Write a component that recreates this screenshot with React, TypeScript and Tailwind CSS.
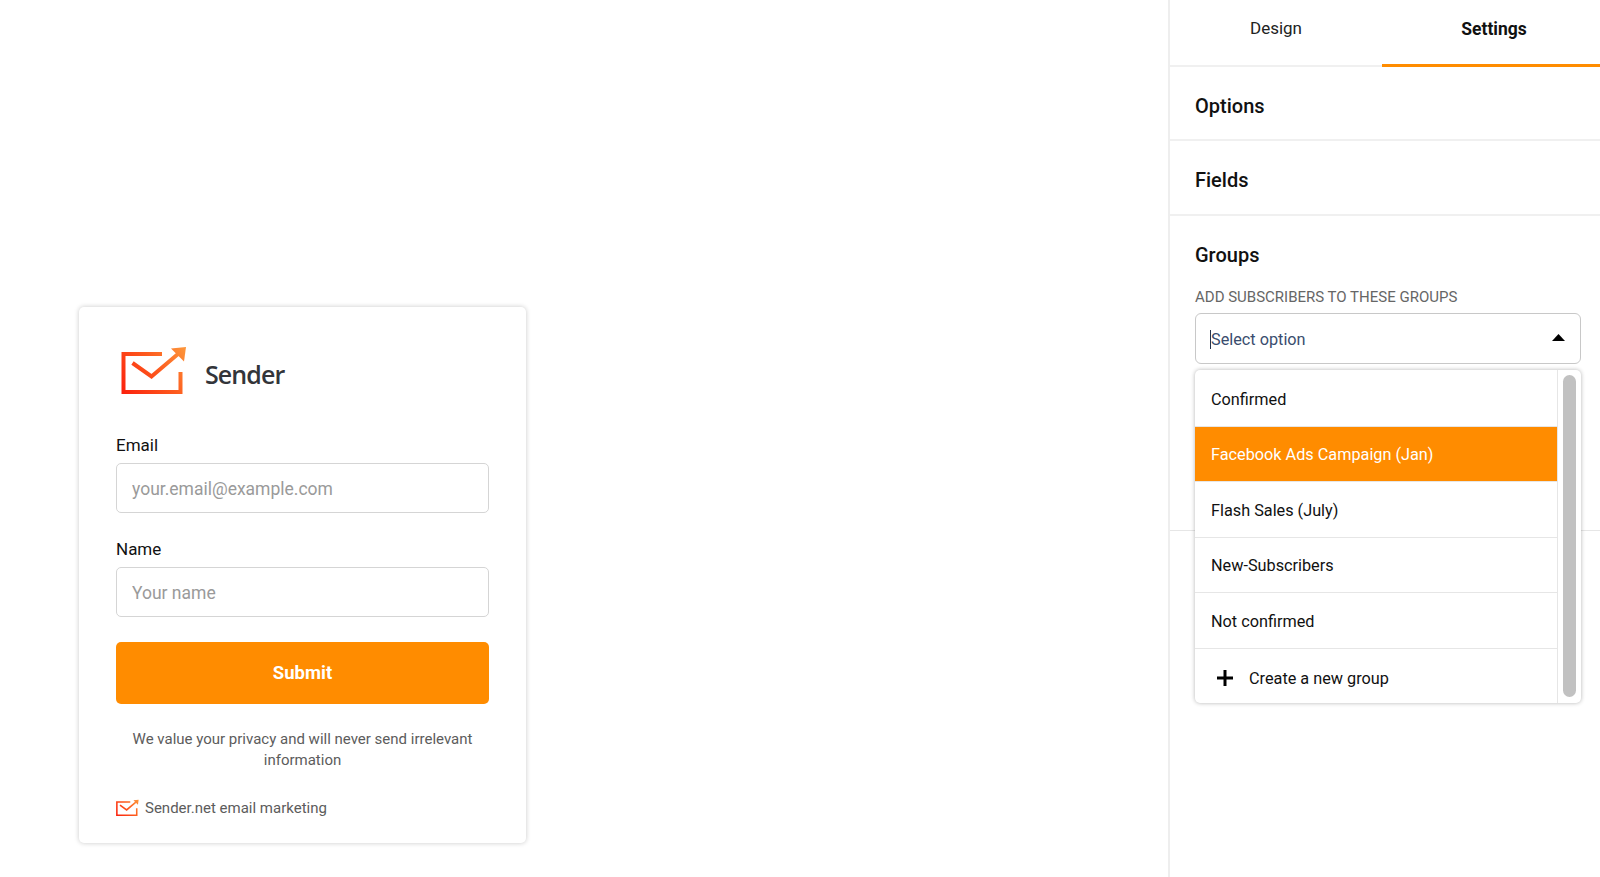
const groups = ["Confirmed", "Facebook Ads Campaign (Jan)", "Flash Sales (July)", "New-Subscribers", "Not confirmed"];

function SenderMark({ id, className, strokeWidth }: { id: string; className: string; strokeWidth: number }) {
  return (
    <svg className={className} viewBox="0 0 66 50" fill="none">
      <defs>
        <linearGradient id={id} x1="0" y1="50" x2="66" y2="0" gradientUnits="userSpaceOnUse">
          <stop offset="0" stopColor="#fb1d0c" />
          <stop offset="0.55" stopColor="#fd5a1e" />
          <stop offset="1" stopColor="#fd9a3c" />
        </linearGradient>
      </defs>
      <path d="M41 8H2.5V46H59.5V26" stroke={`url(#${id})`} strokeWidth={strokeWidth} />
      <path d="M11.5 17L30.5 30.5L57 8" stroke={`url(#${id})`} strokeWidth={strokeWidth} />
      <path d="M50 2.5L65 1L63 15.5Z" fill={`url(#${id})`} />
    </svg>
  );
}

function Field({ label, placeholder }: { label: string; placeholder: string }) {
  return (
    <div>
      <label className="block h-[28px] text-[17px] leading-[20px] text-[#111]">{label}</label>
      <input
        readOnly
        placeholder={placeholder}
        className="h-[50px] w-full rounded-[5px] border border-[#d5d5d5] px-[15px] pt-[2px] text-[17.5px] outline-none placeholder:text-[#9a9a9a]"
      />
    </div>
  );
}

function FormCard() {
  return (
    <div className="h-[536px] w-[447px] rounded-[5px] bg-white px-[37px] pt-[38px] shadow-[0_0_5px_rgba(0,0,0,0.22)]">
      <div className="flex h-[52px] items-center pl-[5px]">
        <SenderMark id="logo-big" className="h-[50px] w-[66px]" strokeWidth={4} />
        <span className="ml-[18px] mt-[7px] font-['Open_Sans'] text-[25px] font-semibold leading-none tracking-[-0.9px] text-[#33353a]">
          Sender
        </span>
      </div>
      <div className="mt-[38px] flex flex-col gap-[26px]">
        <Field label="Email" placeholder="your.email@example.com" />
        <Field label="Name" placeholder="Your name" />
      </div>
      <button className="mt-[25px] h-[62px] w-full rounded-[5px] bg-[#ff8c00] pt-[1px] text-[18.5px] font-bold text-white">
        Submit
      </button>
      <p className="mt-[25px] text-center text-[15px] leading-[21px] text-[#5c5c5c]">
        We value your privacy and will never send irrelevant information
      </p>
      <div className="mt-[27px] flex items-center gap-[6px]">
        <SenderMark id="logo-small" className="h-[18px] w-[23px]" strokeWidth={4.5} />
        <span className="text-[15px] leading-[20px] text-[#5c5c5c]">Sender.net email marketing</span>
      </div>
    </div>
  );
}

function GroupsDropdown() {
  return (
    <div className="absolute left-[25px] top-[370px] flex h-[333px] w-[386px] overflow-hidden rounded-[5px] bg-white shadow-[0_0_4px_rgba(0,0,0,0.3)]">
      <ul className="w-[363px] border-r border-[#e6e6e6]">
        {groups.map((group, i) => (
          <li
            key={group}
            className={
              group.startsWith("Facebook")
                ? "flex h-[55.5px] items-center border-b border-[#e6e6e6] bg-[#ff8c00] pl-[16px] pt-[2px] text-[16.25px] text-white"
                : i === 0
                  ? "flex h-[56.5px] items-center border-b border-[#e6e6e6] pl-[16px] pt-[4px] text-[16.25px] text-[#111]"
                  : "flex h-[55.5px] items-center border-b border-[#e6e6e6] pl-[16px] pt-[3px] text-[16.25px] text-[#111]"
            }
          >
            {group}
          </li>
        ))}
        <li className="flex h-[54.5px] items-center pl-[21px] pt-[4px] text-[16.25px] text-[#111]">
          <svg className="h-[18px] w-[18px]" viewBox="0 0 18 18" fill="none">
            <path d="M9 1V17M1 9H17" stroke="#000" strokeWidth="3" />
          </svg>
          <span className="ml-[15px] mt-[3px]">Create a new group</span>
        </li>
      </ul>
      <div className="flex-1 pl-[5px] pr-[5px] pt-[5px]">
        <div className="h-[322px] w-[13px] rounded-full bg-[#c1c1c1]" />
      </div>
    </div>
  );
}

function SettingsPanel() {
  return (
    <aside className="relative h-full w-[432px] shrink-0 border-l-2 border-[#eeeeee] bg-white">
      <div className="flex h-[67px] border-b-2 border-[#f0f0f0]">
        <div className="flex h-[67px] w-[212px] items-center justify-center pb-[10px] text-[17px] text-[#222]">Design</div>
        <div className="flex h-[67px] flex-1 items-center justify-center border-b-[3px] border-[#ff8c00] pb-[6px] pl-[6px] text-[17.5px] font-bold text-[#111]">
          Settings
        </div>
      </div>
      <div className="flex h-[74px] items-center border-b-2 border-[#f0f0f0] pl-[25px] pt-[6px] text-[20px] font-medium text-[#111]">Options</div>
      <div className="flex h-[75px] items-center border-b-2 border-[#f0f0f0] pl-[25px] pt-[4px] text-[20px] font-medium text-[#111]">Fields</div>
      <div className="h-[315px] border-b border-[#e6e6e6] pl-[25px]">
        <h3 className="pt-[25px] text-[20px] font-medium leading-[28px] text-[#111]">Groups</h3>
        <p className="mt-[18px] text-[15px] leading-[20px] text-[#666]">ADD SUBSCRIBERS TO THESE GROUPS</p>
        <div className="mt-[6px] flex h-[51px] w-[386px] items-center rounded-[6px] border border-[#c8c8c8] pl-[14px] pr-[15px]">
          <span className="mt-[2px] h-[19px] w-px bg-[#24344f]" />
          <span className="mt-[3px] text-[16.25px] text-[#3a4d6e]">Select option</span>
          <svg className="mb-[2px] ml-auto h-[7px] w-[13px]" viewBox="0 0 13 7">
            <path d="M6.5 0L13 7H0Z" fill="#000" />
          </svg>
        </div>
      </div>
      <GroupsDropdown />
    </aside>
  );
}

export default function App() {
  return (
    <div className="flex h-[877px] w-[1600px] overflow-hidden bg-white font-['Roboto',sans-serif]">
      <main className="flex-1 pl-[79px] pt-[307px]">
        <FormCard />
      </main>
      <SettingsPanel />
    </div>
  );
}
